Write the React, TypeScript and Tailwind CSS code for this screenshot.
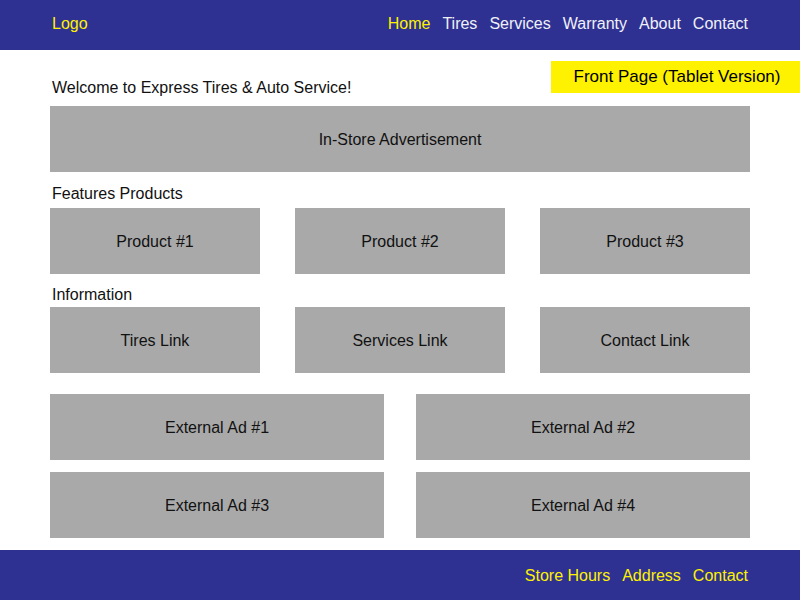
const navLinks = ["Tires", "Services", "Warranty", "About", "Contact"];
const products = ["Product #1", "Product #2", "Product #3"];
const infoLinks = ["Tires Link", "Services Link", "Contact Link"];
const externalAds = ["External Ad #1", "External Ad #2", "External Ad #3", "External Ad #4"];

function Box({ label }: { label: string }) {
  return (
    <div className="flex h-[66px] items-center justify-center bg-[#a9a9a9] pt-[2px] text-[16px] text-[#111]">
      {label}
    </div>
  );
}

export default function App() {
  return (
    <div className="flex h-[600px] w-[800px] flex-col bg-white font-['Liberation_Sans',Arial,sans-serif] text-[#111]">
      <header className="flex h-[50px] shrink-0 items-center justify-between bg-[#2e3192] pb-[2px] pl-[52px] pr-[52px] text-[16px]">
        <span className="text-[#fff200]">Logo</span>
        <nav className="flex gap-[12px]">
          <a className="text-[#fff200]">Home</a>
          {navLinks.map((l) => (
            <a key={l} className="text-[#f0f0f8]">
              {l}
            </a>
          ))}
        </nav>
      </header>

      <main className="flex-1 px-[50px] pt-[11px]">
        <div className="flex h-[45px] items-start justify-between">
          <p className="pl-[2px] pt-[17px] text-[16px] leading-[20px]">
            Welcome to Express Tires &amp; Auto Service!
          </p>
          <div className="-mr-[50px] flex h-[32px] w-[249px] items-center justify-center bg-[#fff200] pl-[3px] text-[17px] text-black">
            Front Page (Tablet Version)
          </div>
        </div>

        <Box label="In-Store Advertisement" />

        <h2 className="mt-[12px] pl-[2px] text-[16px] leading-[20px]">Features Products</h2>
        <div className="mt-[4px] grid grid-cols-3 gap-[35px]">
          {products.map((p) => (
            <Box key={p} label={p} />
          ))}
        </div>

        <h2 className="mt-[11px] pl-[2px] text-[16px] leading-[20px]">Information</h2>
        <div className="mt-[2px] grid grid-cols-3 gap-[35px]">
          {infoLinks.map((p) => (
            <Box key={p} label={p} />
          ))}
        </div>

        <div className="mt-[21px] grid grid-cols-2 gap-x-[32px] gap-y-[12px]">
          {externalAds.map((p) => (
            <Box key={p} label={p} />
          ))}
        </div>
      </main>

      <footer className="flex h-[50px] shrink-0 items-center justify-end gap-[12px] bg-[#2e3192] pr-[52px] pt-[2px] text-[16px] text-[#fff200]">
        <a>Store Hours</a>
        <a>Address</a>
        <a>Contact</a>
      </footer>
    </div>
  );
}
